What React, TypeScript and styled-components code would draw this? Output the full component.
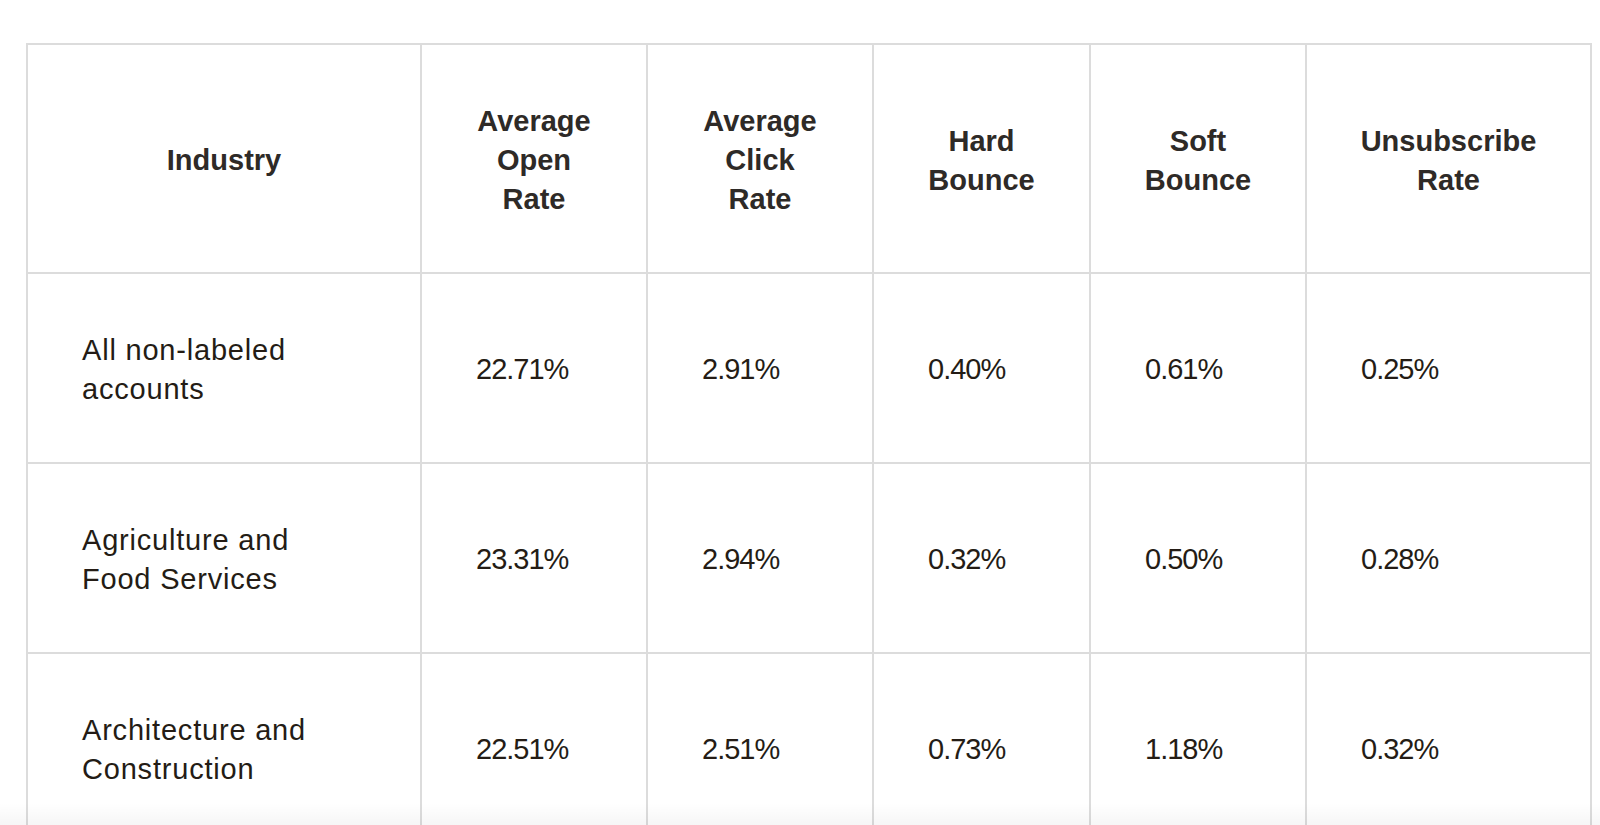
import React from "react";
import styled, { createGlobalStyle } from "styled-components";

const GlobalStyle = createGlobalStyle`
  html, body {
    margin: 0;
    padding: 0;
    background: #ffffff;
    overflow: hidden;
  }
  body {
    font-family: "Liberation Sans", Arial, sans-serif;
    color: #241c15;
  }
`;

const Page = styled.div`
  position: relative;
  width: 1600px;
  height: 825px;
  box-sizing: border-box;
  padding: 43px 0 0 26px;
  overflow: hidden;
`;

const Table = styled.div`
  display: grid;
  grid-template-columns: 394px 226px 226px 217px 216px 285px;
  grid-auto-rows: 190px;
  grid-template-rows: 229px;
  width: max-content;
  border-top: 2px solid #dcdcdc;
  border-left: 2px solid #dcdcdc;
`;

const Cell = styled.div<{ $head?: boolean; $num?: boolean }>`
  box-sizing: border-box;
  display: flex;
  align-items: center;
  justify-content: ${(p) => (p.$head ? "center" : "flex-start")};
  text-align: ${(p) => (p.$head ? "center" : "left")};
  padding: ${(p) => (p.$head ? "4px 40px 0 40px" : "3px 30px 0 54px")};
  border-right: 2px solid #dcdcdc;
  border-bottom: 2px solid #dcdcdc;
  font-size: 29px;
  font-weight: ${(p) => (p.$head ? 700 : 400)};
  line-height: 39px;
  letter-spacing: ${(p) => (p.$num ? "-1px" : p.$head ? "0px" : "0.8px")};
  color: ${(p) => (p.$head ? "#2e2a27" : "#241c15")};
`;

const Line = styled.span`
  display: block;
`;

const BottomShade = styled.div`
  position: absolute;
  left: 0;
  right: 0;
  bottom: 0;
  height: 22px;
  background: linear-gradient(to bottom, rgba(0, 0, 0, 0), rgba(0, 0, 0, 0.035));
  pointer-events: none;
`;

const headers: string[][] = [
  ["Industry"],
  ["Average", "Open", "Rate"],
  ["Average", "Click", "Rate"],
  ["Hard", "Bounce"],
  ["Soft", "Bounce"],
  ["Unsubscribe", "Rate"],
];

const rows: { name: string[]; values: string[] }[] = [
  { name: ["All non-labeled", "accounts"], values: ["22.71%", "2.91%", "0.40%", "0.61%", "0.25%"] },
  { name: ["Agriculture and", "Food Services"], values: ["23.31%", "2.94%", "0.32%", "0.50%", "0.28%"] },
  { name: ["Architecture and", "Construction"], values: ["22.51%", "2.51%", "0.73%", "1.18%", "0.32%"] },
];

export default function App() {
  return (
    <>
      <GlobalStyle />
      <Page>
        <Table>
          {headers.map((h, i) => (
            <Cell $head key={`h${i}`}>
              <div>
                {h.map((line, j) => (
                  <Line key={j}>{line}</Line>
                ))}
              </div>
            </Cell>
          ))}
          {rows.map((r, i) => (
            <React.Fragment key={`r${i}`}>
              <Cell>
                <div>
                  {r.name.map((line, j) => (
                    <Line key={j}>{line}</Line>
                  ))}
                </div>
              </Cell>
              {r.values.map((v, j) => (
                <Cell $num key={j}>
                  {v}
                </Cell>
              ))}
            </React.Fragment>
          ))}
        </Table>
        <BottomShade />
      </Page>
    </>
  );
}
